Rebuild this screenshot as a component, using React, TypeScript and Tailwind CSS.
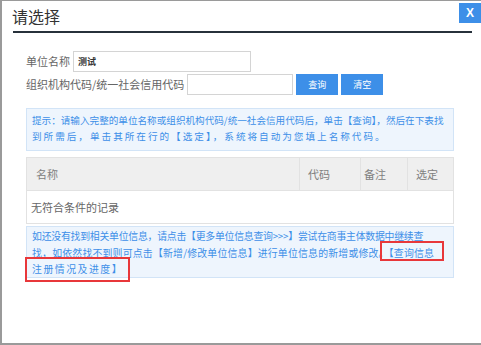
const cjk = '[font-family:"Noto_Sans_CJK_SC","Noto_Sans",sans-serif]';

function FieldRow({label, value, inputWidth}: {label: string; value?: string; inputWidth: string}) {
	return (
		<div className="flex items-center gap-[3px]">
			<span className="text-[11px] text-[#666]">{label}</span>
			<div className={`${inputWidth} h-[21px] border border-[#d4d4d4] bg-white flex items-center px-[4px]`}>
				{value && <span className="text-[9px] font-bold text-[#333]">{value}</span>}
			</div>
		</div>
	);
}

export default function App() {
	return (
		<div className={`${cjk} relative w-[481px] h-[345px] overflow-hidden bg-white border-t border-l-2 border-b-2 border-[#9a9a9a]`}>
			{/* header */}
			<div className="flex items-center h-[30px] px-[10px]">
				<h1 className="text-[16px] text-[#333] leading-none">请选择</h1>
			</div>
			<button className="absolute top-[2px] right-0 w-[22px] h-[20px] bg-[#3d8fe8] flex items-center justify-center text-white text-[12px] font-bold [font-family:'Liberation_Sans',sans-serif]">
				X
			</button>
			<div className="ml-[11px] mr-[9px] h-[2px] bg-[#27313b]" />

			<div className="px-[24px] pt-[18px]">
				<div className="flex flex-col gap-[2px]">
					<FieldRow label="单位名称" value="测试" inputWidth="w-[178px]" />
					<div className="flex items-center gap-[3px]">
						<FieldRow label="组织机构代码/统一社会信用代码" inputWidth="w-[106px]" />
						<button className="w-[42px] h-[21px] bg-[#3d8fe8] text-white text-[9px]">查询</button>
						<button className="w-[42px] h-[21px] bg-[#3d8fe8] text-white text-[9px]">清空</button>
					</div>
				</div>

				<div className="mt-[13px] w-[428px] h-[43px] border border-[#d2e4f7] bg-[#eef5fd] px-[5px] pt-[3px] text-[9.6px] leading-[16px] text-[#3d8fe8] whitespace-nowrap">
					<div>提示：请输入完整的单位名称或组织机构代码/统一社会信用代码后，单击【查询】，然后在下表找</div>
					<div className="tracking-[2px]">到所需后，单击其所在行的【选定】，系统将自动为您填上名称代码。</div>
				</div>

				<div className="mt-[6px] w-[428px] border border-[#e2e2e2] text-[11px]">
					<div className="grid grid-cols-[272px_61px_47px_46px] h-[32px] bg-[#efefef] text-[#808080]">
						<div className="flex items-center pl-[9px]">名称</div>
						<div className="flex items-center pl-[8px] border-l border-[#e2e2e2]">代码</div>
						<div className="flex items-center pl-[3px] border-l border-[#e2e2e2]">备注</div>
						<div className="flex items-center pl-[8px] border-l border-[#e2e2e2]">选定</div>
					</div>
					<div className="h-[33px] flex items-center pl-[4px] border-t border-[#e2e2e2] text-[#666]">
						无符合条件的记录
					</div>
				</div>

				<div className="relative mt-[2px] w-[428px] h-[52px] border border-[#d2e4f7] bg-[#eef5fd] px-[5px] pt-[1px] text-[9.9px] leading-[16.5px] text-[#3d8fe8] whitespace-nowrap">
					<div className="tracking-[-0.25px]">如还没有找到相关单位信息，请点击【更多单位信息查询&gt;&gt;&gt;】尝试在商事主体数据中继续查</div>
					<div className="tracking-[0.2px]">找，如依然找不到则可点击【新增/修改单位信息】进行单位信息的新增或修改。【查询信息</div>
					<div className="tracking-[1.5px]">注册情况及进度】</div>
					<span className="absolute left-[353px] top-[14px] w-[64px] h-[20px] border-2 border-[#e8373a]" />
					<span className="absolute left-[-2px] top-[30px] w-[105px] h-[25px] border-2 border-[#e8373a]" />
				</div>
			</div>
		</div>
	);
}
